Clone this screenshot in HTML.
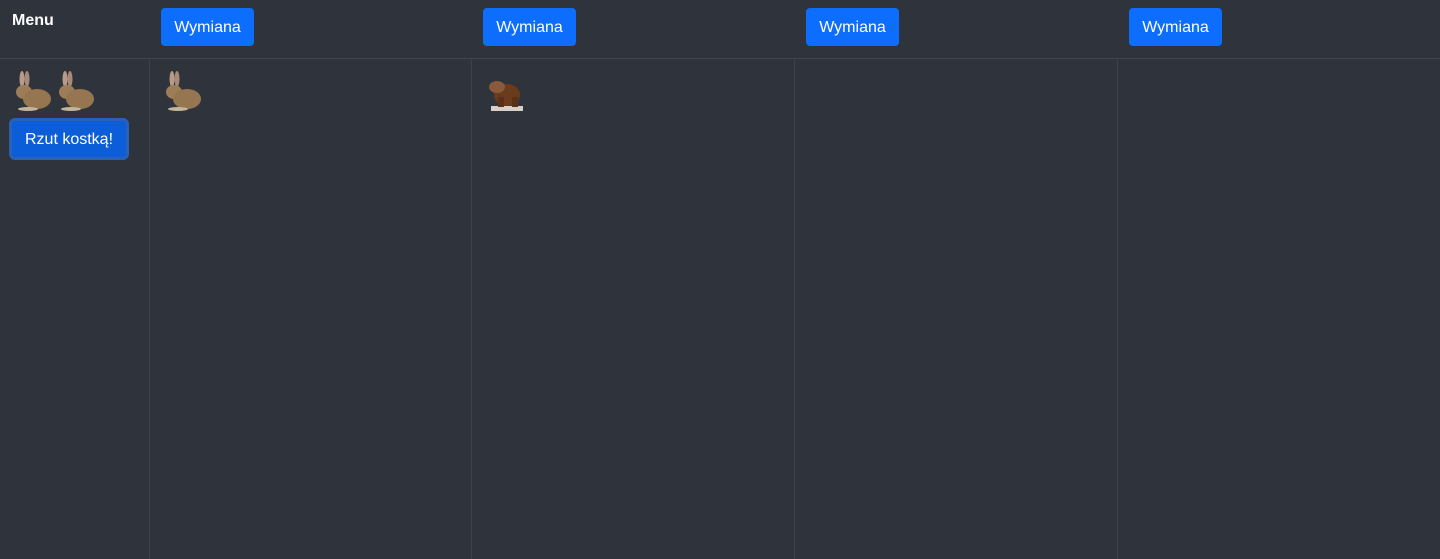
<!DOCTYPE html>
<html><head><style>
body{margin:0;width:1440px;height:559px;background:#2f333b;font-family:"Liberation Sans",sans-serif;overflow:hidden;position:relative}
.vl{position:absolute;top:58px;bottom:0;width:1px;background:#3d4149}
.hl{position:absolute;left:0;right:0;top:58px;height:1px;background:#40444c}
.btn{position:absolute;top:8px;height:38px;width:93px;background:#0d6efd;color:#fff;border-radius:4px;font-size:16px;line-height:40px;text-align:center}
.menu{position:absolute;left:12px;top:12px;color:#fff;font-weight:bold;font-size:16px}
.rz{position:absolute;left:9px;top:118px;width:120px;height:42px;background:#0b5ed7;border:3px solid #2a60b8;border-radius:6px;color:#fff;font-size:16px;line-height:38px;text-align:center;box-sizing:border-box}
svg{position:absolute}
</style></head><body>
<div class="menu">Menu</div>
<div class="btn" style="left:161px">Wymiana</div>
<div class="btn" style="left:483px">Wymiana</div>
<div class="btn" style="left:806px">Wymiana</div>
<div class="btn" style="left:1129px">Wymiana</div>
<div class="hl"></div>
<div class="vl" style="left:149px"></div>
<div class="vl" style="left:471px"></div>
<div class="vl" style="left:794px"></div>
<div class="vl" style="left:1117px"></div>
<svg width="0" height="0"><defs><g id="r">
<ellipse cx="10" cy="9" rx="2.5" ry="8" fill="#b89a88"/><ellipse cx="15" cy="9" rx="2.5" ry="8" fill="#a88a78"/>
<ellipse cx="12" cy="22" rx="8" ry="7" fill="#9c7d58"/>
<ellipse cx="25" cy="29" rx="14" ry="10" fill="#967650"/>
<ellipse cx="16" cy="39" rx="10" ry="2" fill="#c4b49a"/>
</g><g id="b">
<ellipse cx="20" cy="22" rx="13" ry="11" fill="#6b3b1e"/>
<ellipse cx="10" cy="14" rx="8" ry="6" fill="#8a5a3a"/>
<rect x="4" y="33" width="32" height="5" fill="#d8cfc8"/>
<rect x="11" y="24" width="6" height="10" fill="#5a3018"/><rect x="25" y="24" width="6" height="10" fill="#5a3018"/>
</g></defs></svg>
<svg style="left:12px;top:70px" width="40" height="41"><use href="#r"/></svg>
<svg style="left:55px;top:70px" width="40" height="41"><use href="#r"/></svg>
<svg style="left:162px;top:70px" width="40" height="41"><use href="#r"/></svg>
<svg style="left:487px;top:73px" width="38" height="38"><use href="#b"/></svg>
<div class="rz">Rzut kostką!</div>
</body></html>
